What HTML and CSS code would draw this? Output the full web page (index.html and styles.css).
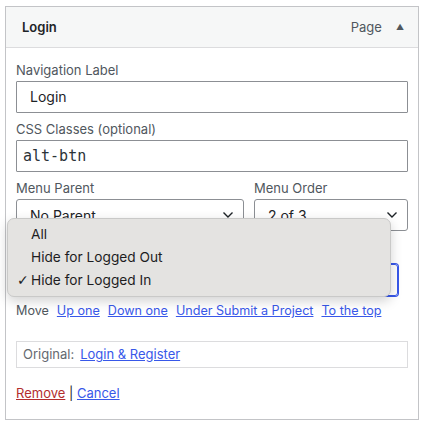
FILE: index.html
```html
<!DOCTYPE html>
<html lang="en">
<head>
  <meta charset="UTF-8" />
  <meta name="viewport" content="width=device-width, initial-scale=1" />
  <title>Menu item: Login</title>
  <link rel="stylesheet" href="styles.css">
</head>
<body>
  <div class="menu-item">
    <div class="item-bar">
      <span class="item-title">Login</span>
      <span class="item-controls">
        <span class="item-type">Page</span>
        <span class="item-toggle">&#9650;</span>
      </span>
    </div>

    <div class="item-settings">
      <div class="field">
        <label class="field-label">Navigation Label</label>
        <div class="text-input">Login</div>
      </div>

      <div class="field">
        <label class="field-label">CSS Classes (optional)</label>
        <div class="text-input code">alt-btn</div>
      </div>

      <div class="field-row">
        <div class="field parent">
          <label class="field-label">Menu Parent</label>
          <div class="select">
            <span>No Parent</span>
            <svg class="chevron" viewBox="0 0 12 8" width="12" height="8"><path d="M1.5 1.5 6 6l4.5-4.5" fill="none" stroke="#1d2327" stroke-width="1.4"/></svg>
          </div>
        </div>
        <div class="field order">
          <label class="field-label">Menu Order</label>
          <div class="select">
            <span>2 of 3</span>
            <svg class="chevron" viewBox="0 0 12 8" width="12" height="8"><path d="M1.5 1.5 6 6l4.5-4.5" fill="none" stroke="#1d2327" stroke-width="1.4"/></svg>
          </div>
        </div>
      </div>

      <!-- visibility select, its label sits under the open list -->
      <div class="field visibility">
        <div class="label-space"></div>
        <div class="select focused"></div>
      </div>

      <div class="move">
        <span>Move</span>
        <a href="#">Up one</a>
        <a href="#">Down one</a>
        <a href="#">Under Submit a Project</a>
        <a href="#">To the top</a>
      </div>

      <div class="original">
        <span class="original-label">Original:</span>
        <a href="#">Login &amp; Register</a>
      </div>

      <div class="actions">
        <a href="#" class="remove">Remove</a> | <a href="#">Cancel</a>
      </div>
    </div>

    <!-- open native dropdown for the visibility select -->
    <ul class="popup">
      <li>All</li>
      <li>Hide for Logged Out</li>
      <li class="checked">Hide for Logged In</li>
    </ul>
  </div>
</body>
</html>
```

FILE: styles.css
```css
body {
  margin: 0;
  background: #fff;
  font-family: Inter, "Liberation Sans", sans-serif;
  font-size: 13px;
  color: #1d2327;
}
a {
  color: #3858e9;
  text-decoration: underline;
}

.menu-item {
  position: relative;
  margin: 6px 9px 7px 5px;
  border: 1px solid #c3c4c7;
}

.item-bar {
  display: flex;
  align-items: center;
  justify-content: space-between;
  height: 40px;
  padding: 0 14px 0 16px;
  background: #f6f7f7;
  border-bottom: 1px solid #dcdcde;
}
.item-title {
  font-weight: 600;
  font-size: 13px;
}
.item-controls {
  display: flex;
  align-items: center;
  gap: 14px;
  color: #50575e;
}
.item-toggle {
  font-size: 8px;
}

.item-settings {
  padding: 13px 10px 17px 10px;
}

.field {
  margin-bottom: 7px;
}
.field-label {
  display: block;
  line-height: 18px;
  margin-bottom: 2px;
  color: #50575e;
}
.label-space {
  height: 20px;
}
.text-input {
  height: 30px;
  line-height: 30px;
  padding: 0 13px;
  border: 1px solid #8c8f94;
  border-radius: 1px;
  font-size: 14px;
}
.text-input.code {
  font-family: "DejaVu Sans Mono", monospace;
  font-size: 15px;
  padding: 0 6px;
  color: #2c3338;
}

.field-row {
  display: flex;
  gap: 10px;
}
.field-row .parent {
  width: 228px;
}
.field-row .order {
  flex: 1;
}

.select {
  display: flex;
  align-items: center;
  justify-content: space-between;
  height: 30px;
  padding: 0 9px 0 13px;
  border: 1px solid #8c8f94;
  border-radius: 3px;
  font-size: 14px;
}
.select.focused {
  width: 358px;
  border-color: #3858e9;
  box-shadow: 0 0 0 1px #3858e9;
}

.visibility {
  margin-top: 6px;
  margin-bottom: 6px;
}

.move {
  display: flex;
  gap: 8px;
  line-height: 18px;
  font-size: 12.6px;
  color: #50575e;
}

.original {
  display: flex;
  gap: 6px;
  margin-top: 21px;
  height: 25px;
  line-height: 25px;
  padding: 0 6px;
  border: 1px solid #dcdcde;
}
.original-label {
  color: #646970;
}

.actions {
  margin-top: 16px;
  line-height: 18px;
}
.actions .remove {
  color: #b32d2e;
}

.popup {
  position: absolute;
  left: 1px;
  top: 211px;
  width: 382px;
  margin: 0;
  padding: 4px 0;
  list-style: none;
  background: #e4e3e1;
  border: 1px solid #c9c9c8;
  border-radius: 7px;
  box-shadow: 0 4px 12px rgba(0, 0, 0, 0.18);
  font-size: 13.7px;
  color: #1d1d1f;
}
.popup li {
  position: relative;
  height: 23px;
  line-height: 23px;
  padding-left: 23px;
}
.popup li.checked::before {
  content: "\2713";
  position: absolute;
  left: 9px;
  font-family: "DejaVu Sans", sans-serif;
  font-size: 14px;
}
```
